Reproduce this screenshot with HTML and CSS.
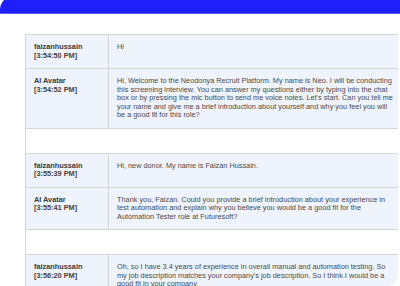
FILE: index.html
```html
<!DOCTYPE html>
<html>
<head>
<meta charset="utf-8">
<link rel="stylesheet" href="styles.css">
</head>
<body>
<div class="header"></div>
<div class="panel">
  <table class="chat">
    <colgroup><col class="c-who"><col class="c-text"></colgroup>
    <tr class="msg">
      <td class="who"><b>faizanhussain</b><br><span class="time">[3:54:50 PM]</span></td>
      <td class="text">Hi</td>
    </tr>
    <tr class="msg">
      <td class="who"><b>AI Avatar</b><br><span class="time">[3:54:52 PM]</span></td>
      <td class="text">Hi, Welcome to the Neodonya Recruit Platform. My name is Neo. I will be conducting this screening interview. You can answer my questions either by typing into the chat box or by pressing the mic button to send me voice notes. Let's start. Can you tell me your name and give me a brief introduction about yourself and why you feel you will be a good fit for this role?</td>
    </tr>
    <tr class="gap"><td colspan="2"></td></tr>
    <tr class="msg">
      <td class="who"><b>faizanhussain</b><br><span class="time">[3:55:39 PM]</span></td>
      <td class="text">Hi, new donor. My name is Faizan Hussain.</td>
    </tr>
    <tr class="msg">
      <td class="who"><b>AI Avatar</b><br><span class="time">[3:55:41 PM]</span></td>
      <td class="text">Thank you, Faizan. Could you provide a brief introduction about your experience in test automation and explain why you believe you would be a good fit for the Automation Tester role at Futuresoft?</td>
    </tr>
    <tr class="gap"><td colspan="2"></td></tr>
    <tr class="msg">
      <td class="who"><b>faizanhussain</b><br><span class="time">[3:56:20 PM]</span></td>
      <td class="text">Oh, so I have 3.4 years of experience in overall manual and automation testing. So my job description matches your company's job description. So I think I would be a good fit in your company.</td>
    </tr>
  </table>
</div>
</body>
</html>
```
FILE: styles.css
```css
html, body {
  margin: 0;
  padding: 0;
  background: #ffffff;
  overflow: hidden;
}
body {
  width: 400px;
  height: 286px;
  font-family: "Liberation Sans", Arial, sans-serif;
}
.header {
  margin-top: -4px;
  height: 17px;
  background: #1f1ffc;
  border-bottom: 1px solid #5c5cff;
  border-top-left-radius: 14px;
}
.panel {
  width: 398px;
  height: 272px;
  padding-top: 20px;
  box-sizing: border-box;
  overflow: hidden;
  border-bottom-right-radius: 10px;
}
.chat {
  margin-left: 25px;
  width: 380px;
  table-layout: fixed;
  border-collapse: collapse;
  font-size: 7.33px;
  line-height: 8.5px;
  color: #4a4a4a;
}
.c-who { width: 83px; }
.c-text { width: 297px; }
.chat td {
  border: 1px solid #d6d6d6;
  vertical-align: top;
  padding: 8px 8px;
}
.msg td {
  background: #eff3fb;
}
.who {
  color: #3a3a3a;
}
.time {
  font-weight: bold;
  color: #4a4038;
}
.text {
  padding-left: 9px;
}
.gap td {
  height: 24px;
  padding: 0;
  background: #ffffff;
}
```
